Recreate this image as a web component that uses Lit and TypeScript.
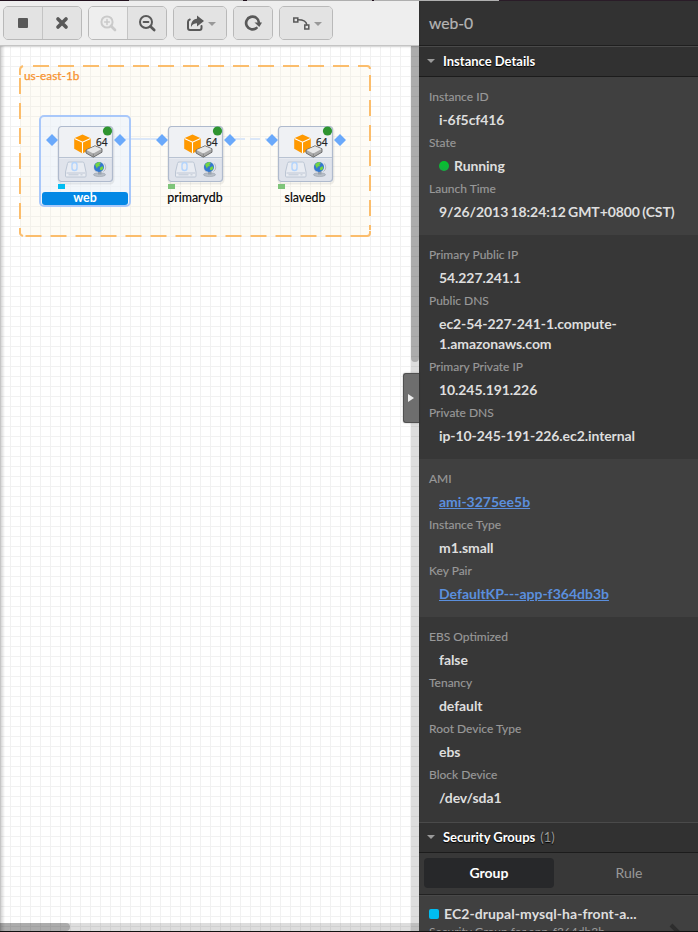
import { LitElement, html, css, svg, nothing } from "lit";
import { customElement, property } from "lit/decorators.js";
import { classMap } from "lit/directives/class-map.js";

const icons = {
  stop: svg`<rect x="5" y="5" width="10" height="10" rx="1"/>`,
  close: svg`<path d="M6 6l8 8M14 6l-8 8" class="line thick"/>`,
  zoomIn: svg`<circle cx="9" cy="9" r="5.6" class="line"/><path d="M13 13l4 4" class="line bold"/><path d="M6.6 9h4.8M9 6.6v4.8" class="line thin"/>`,
  zoomOut: svg`<circle cx="9" cy="9" r="6" class="line"/><path d="M13.500 13.500l3.700 3.500" class="line bold"/><path d="M6.600 9h4.800" class="line"/>`,
  share: svg`<path d="M4.800 6.500C3.200 7 3 7.600 3 9v6q0 2 2 2h9.500q2 0 2-2v-2" class="line"/><path d="M12 2.500l7 5.500L12 13.500v-3.200c-2.500 0-4.200.6-6 3.700-.2-4.700 2-8 6-8.300z"/>`,
  refresh: svg`<path d="M13.500 15A6.400 6.400 0 1 1 15.900 9.500" class="line bold"/><path d="M11.500 9.500h7.500l-2.700 4.500z"/>`,
  curve: svg`<rect x="2.800" y="5" width="4" height="4" class="line thin"/><rect x="13.800" y="12" width="4" height="4" class="line thin"/><path d="M7 6.800c5 0 8.400 1.400 8.800 5" class="line thin"/>`,
};

@customElement("tool-button")
class ToolButton extends LitElement {
  @property() icon: keyof typeof icons = "stop";
  @property({ type: Boolean }) menu = false;
  @property({ type: Boolean, reflect: true }) disabled = false;
  static styles = css`
    :host { display: flex; align-items: center; justify-content: center; height: 32px; background: #e3e3e3; color: #595959; }
    :host([disabled]) { background: #eee; color: #cacaca; }
    svg { display: block; fill: currentColor; }
    .line { fill: none; stroke: currentColor; stroke-width: 2; stroke-linecap: round; }
    .bold { stroke-width: 2.7; }
    .thick { stroke-width: 3.7; }
    .thin { stroke-width: 1.5; }
    .caret { width: 0; margin: 2px 0 0 3px; border: 4px solid transparent; border-top-color: #999; border-bottom: 0; }
  `;
  render() {
    return html`<svg width="20" height="20" viewBox="0 0 20 20">${icons[this.icon]}</svg>
      ${this.menu ? html`<i class="caret"></i>` : nothing}`;
  }
}

@customElement("top-toolbar")
class TopToolbar extends LitElement {
  static styles = css`
    :host { display: flex; gap: 6px; height: 45px; padding: 5px 3px 0; box-sizing: border-box; background: #eee; border-bottom: 1px solid #c4c4c4; box-shadow: 0 1px 2px #0002; position: relative; }
    .group { display: flex; height: 32px; border: 1px solid #b9b9b9; border-radius: 5px; overflow: hidden; }
    .group > * + * { border-left: 1px solid #c4c4c4; }
    .w38 { width: 38px; }
    .w52 { width: 52px; }
  `;
  render() {
    return html`
      <div class="group"><tool-button class="w38" icon="stop"></tool-button><tool-button class="w38" icon="close"></tool-button></div>
      <div class="group"><tool-button class="w38" icon="zoomIn" disabled></tool-button><tool-button class="w38" icon="zoomOut"></tool-button></div>
      <div class="group"><tool-button class="w52" icon="share" menu></tool-button></div>
      <div class="group"><tool-button class="w38" icon="refresh"></tool-button></div>
      <div class="group"><tool-button class="w52" icon="curve" menu></tool-button></div>
    `;
  }
}

interface Instance { name: string; x: number; tag: string; selected?: boolean; }
const instances: Instance[] = [
  { name: "web", x: 57.5, tag: "#00bdf2", selected: true },
  { name: "primarydb", x: 167.5, tag: "#7fc57a" },
  { name: "slavedb", x: 277.5, tag: "#7fc57a" },
];

@customElement("stack-canvas")
class StackCanvas extends LitElement {
  static styles = css`
    :host { display: block; position: relative; overflow: hidden; background: #fff; }
    svg { display: block; }
    text { font-family: Lato, sans-serif; }
    .zone { font-size: 11.8px; fill: #f7922e; stroke: #f7922e; stroke-width: .25px; }
    .name { font-size: 12.4px; fill: #000; stroke: #000; stroke-width: .15px; text-anchor: middle; }
    .name.on { fill: #fff; stroke: none; font-weight: 700; }
    .bits { font: 10px "Open Sans", sans-serif; fill: #222; stroke: #222; stroke-width: .25px; }
    .vbar, .hbar { position: absolute; background: #0002; }
    .vbar { right: 0; top: 0; bottom: 0; width: 8px; }
    .hbar { left: 0; right: 0; bottom: 0; height: 8px; }
    .vthumb, .hthumb { position: absolute; background: #00000038; }
    .vthumb { right: 0; top: 0; width: 8px; height: 316px; border-radius: 0 0 4px 4px; }
    .hthumb { left: 0; bottom: 0; width: 70px; height: 8px; border-radius: 0 4px 4px 0; }
    .shade { position: absolute; left: 0; top: 0; bottom: 0; width: 5px; background: linear-gradient(90deg, #0003, #0000); }
  `;
  instance(n: Instance) {
    return svg`<g transform="translate(${n.x} 125.5)">
      ${n.selected ? svg`<rect x="-17.500" y="-9.500" width="90" height="90" rx="4" fill="#e8f0fd" fill-opacity=".55" stroke="#a9c8fa" stroke-width="2"/>
        <rect x="-15.500" y="66.500" width="86" height="13" rx="3" fill="#0388e5"/>` : nothing}
      <rect x="1" y="2" width="55" height="56" rx="3.500" fill="none" stroke="#0001" stroke-width="2"/>
      <rect x="1" y="1" width="54" height="55" rx="3" fill="#eff1f4"/>
      <path d="M1 33h54v20q0 3-3 3H4q-3 0-3-3z" fill="#dfe3eb"/>
      <path d="M1 32h54" stroke="#b9c3d2"/>
      <rect x="1" y="1" width="54" height="55" rx="3" fill="none" stroke="#afbacd" stroke-width="1.200"/>
      <path d="M25 9l8.300 3.700v10.600L25 28l-8.300-4.700V12.700z" fill="#ff9900"/>
      <path d="M17 13l8 3.700 8-3.700M25 16.700V28" fill="none" stroke="#fff" stroke-width="1.100"/>
      <path d="M28.500 24.500l9-4.200 7 3v3.400l-8.700 5-7.300-4.200z" fill="#aaa" stroke="#666" stroke-width=".9" stroke-linejoin="round"/>
      <path d="M29 24.600l8.500-3.900 6.500 2.700-8.200 4.600z" fill="#e8e8e8"/>
      <path d="M35.800 28v3.300" stroke="#777" stroke-width=".8"/>
      <text class="bits" x="38.500" y="20" textLength="11.500">64</text>
      <circle cx="50" cy="5.500" r="4.600" fill="#2e9430"/>
      <path d="M11.500 36.500h13.500q1.500 0 1.700 1.500l1.800 8.500v4q0 1-1 1h-18.500q-1 0-1-1v-4l2-8.500q.2-1.500 1.500-1.500z" fill="#e9ecf2" stroke="#bcc6d4"/>
      <path d="M9 47.500h18.500M11 49.300h10M23 49.300h2" stroke="#b4bfce" stroke-width=".8"/>
      <rect x="14.500" y="37" width="5" height="8" rx="2.500" fill="none" stroke="#b3d4fc" stroke-width="1.400"/>
      <path d="M38 38q-3 5 1 8.500M47 38q3 5-1 8" fill="none" stroke="#a5acb8" stroke-width=".8"/>
      <ellipse cx="42" cy="49.200" rx="6" ry="1.900" fill="#b8bfc8" stroke="#9098a2" stroke-width=".5"/>
      <path d="M40.500 45.500h3.500v3.500h-3.500z" fill="#98a2ae"/>
      <circle cx="41.500" cy="41.500" r="5" fill="#3478cf"/>
      <path d="M37.500 39q1.500-2.800 5-2.600l.7 1.800-1.700 1 1.200 1.300-2.500.5-.7 2.200zM43 41.500l2.300-.8.600 2.300-2 2-1.700-.9z" fill="#72d544"/>
      <path d="M-11.500 14.500l6-6 6 6-6 6zM56.500 14.500l6-6 6 6-6 6z" fill="#6aa9fb"/>
      <path d="M.5 58.500h7v5h-7z" fill=${n.tag}/>
      <text class="name ${n.selected ? "on" : ""}" x="27.500" y="76.500">${n.name}</text>
    </g>`;
  }
  render() {
    return html`
      <svg width="419" height="885" viewBox="0 46 419 885">
        <defs><pattern id="grid" width="10" height="10" patternUnits="userSpaceOnUse" y="6"><path d="M0 .5h10M.5 0v10" stroke="#f1f1f1"/></pattern></defs>
        <rect x="0" y="45" width="419" height="886" fill="url(#grid)"/>
        <rect x="20" y="67" width="350" height="169" rx="3" fill="#fcf3dc" fill-opacity=".25"/>
        <path d="M27 66H366" stroke="#fbbd6c" stroke-width="2" stroke-dasharray="16 9" stroke-dashoffset="-6"/>
        <path d="M20 78V230M370 75V230" stroke="#fbbd6c" stroke-width="2" stroke-dasharray="16 9"/>
        <path d="M25.500 236H364" stroke="#fbbd6c" stroke-width="2" stroke-dasharray="16 9" />
        <path d="M20 75V70q0-3 3-4M364 66h3q3 0 3 3M370 231v2q0 3-3 3h-3M20 229v4q0 2 3 3" fill="none" stroke="#fbbd6c" stroke-width="2"/>
        <text class="zone" x="24" y="80">us-east-1b</text>
        <path d="M125 139h32" stroke="#dbe7f8" stroke-width="2"/>
        <path d="M235 139h32" stroke="#dbe7f8" stroke-width="2" stroke-dasharray="10 5"/>
        ${instances.map((n) => this.instance(n))}
      </svg>
      <div class="shade"></div>
      <div class="vbar"></div><div class="hbar"></div>
      <div class="vthumb"></div><div class="hthumb"></div>
    `;
  }
}

interface Field { label: string; value: string; link?: boolean; running?: boolean; }
const sections: Field[][] = [
  [
    { label: "Instance ID", value: "i-6f5cf416" },
    { label: "State", value: "Running", running: true },
    { label: "Launch Time", value: "9/26/2013 18:24:12 GMT+0800 (CST)" },
  ],
  [
    { label: "Primary Public IP", value: "54.227.241.1" },
    { label: "Public DNS", value: "ec2-54-227-241-1.compute-1.amazonaws.com" },
    { label: "Primary Private IP", value: "10.245.191.226" },
    { label: "Private DNS", value: "ip-10-245-191-226.ec2.internal" },
  ],
  [
    { label: "AMI", value: "ami-3275ee5b", link: true },
    { label: "Instance Type", value: "m1.small" },
    { label: "Key Pair", value: "DefaultKP---app-f364db3b", link: true },
  ],
  [
    { label: "EBS Optimized", value: "false" },
    { label: "Tenancy", value: "default" },
    { label: "Root Device Type", value: "ebs" },
    { label: "Block Device", value: "/dev/sda1" },
  ],
];

@customElement("property-panel")
class PropertyPanel extends LitElement {
  static styles = css`
    :host { display: flex; flex-direction: column; width: 279px; height: 930px; overflow: hidden; background: #373737; color: #dedede; font: 13px/20px Lato, sans-serif; }
    :host * { box-sizing: border-box; }
    .title { flex: none; height: 45px; padding: 0 10px; font-size: 15.7px; line-height: 45px; color: #b5b5b5; background: #323232; border-bottom: 1px solid #1f1f1f; -webkit-text-stroke: .2px #b5b5b5; }
    .head { flex: none; display: flex; align-items: center; height: 31px; padding: 0 0 1px 8px; background: #313131; border-top: 1px solid #4a4a4a; border-bottom: 1px solid #1c1c1c; font-weight: 700; color: #fff; text-shadow: 0 1px 1px #000; }
    .head i { border: 4px solid transparent; border-top-color: #9a9a9a; border-bottom: 0; margin-right: 8px; }
    .head span { margin-left: 5px; color: #999; font-weight: 400; }
    dl { flex: none; margin: 0; padding: 10px; }
    dl:last-of-type { padding-bottom: 11px; }
    dl.light { background: #404040; }
    dt { font-size: 12px; color: #999; -webkit-text-stroke: .15px #999; }
    dd { display: flex; align-items: center; margin: 3px 0 3px 10px; font-size: 14px; font-weight: 700; letter-spacing: -.08px; width: 240px; }
    dd span { max-width: 197px; }
    dd span.wide { max-width: none; white-space: nowrap; word-spacing: -1px; }
    a { color: #5b8fdd; text-decoration: underline; letter-spacing: 0; }
    .dot { width: 10px; height: 10px; margin-right: 5px; border-radius: 5px; background: linear-gradient(#05c32b, #16ad43); }
    .tabs { flex: none; display: flex; height: 42px; padding: 5px; border-bottom: 1px solid #222; background: #383838; font-size: 14px; line-height: 30px; text-align: center; }
    .tab { width: 130px; height: 30px; border-radius: 4px; color: #999; margin-right: 10px; flex: none; }
    .tab.on { background: #27282a; color: #fff; font-weight: 700; }
    .item { flex: 1; position: relative; padding: 9px 10px; background: #404040; border-top: 1px solid #494949; overflow: hidden; }
    .item b { display: flex; align-items: center; line-height: 18px; font-size: 14px; letter-spacing: .07px; white-space: nowrap; }
    .item b::before { content: ""; width: 10px; height: 10px; margin-right: 5px; border-radius: 2px; background: #00bdf2; }
    .item p { margin: 0; font-size: 12px; line-height: 17px; color: #999; }
    .item svg { position: absolute; right: 9px; top: 27px; }
  `;
  render() {
    return html`
      <div class="title">web-0</div>
      <div class="head"><i></i>Instance Details</div>
      ${sections.map((s, i) => html`<dl class=${classMap({ light: i % 2 === 0 })}>
        ${s.map((f) => html`<dt>${f.label}</dt><dd>${f.running ? html`<i class="dot"></i>` : nothing}${f.link
          ? html`<a>${f.value}</a>`
          : html`<span class=${classMap({ wide: f.label === "Launch Time" || f.label === "Private DNS" })}>${f.value}</span>`}</dd>`)}
      </dl>`)}
      <div class="head"><i></i>Security Groups <span>(1)</span></div>
      <div class="tabs"><div class="tab on">Group</div><div class="tab">Rule</div></div>
      <div class="item"><b>EC2-drupal-mysql-ha-front-a...</b><p>Security Group for app-f364db3b</p>
        <svg width="20" height="20" viewBox="0 0 20 20"><path d="M2 2l8 8-8 8" fill="none" stroke="#2d2d2d" stroke-width="4"/></svg></div>
    `;
  }
}

@customElement("app-root")
class AppRoot extends LitElement {
  static styles = css`
    :host { display: grid; grid-template: 1px 45px 885px 1px / 419px 279px; position: relative; width: 698px; height: 932px; overflow: hidden; background: #111; }
    .strip { grid-column: 1 / 3; background: linear-gradient(90deg, #23121f 129px, #b0b0b0 129px 243px, #23121f 243px 247px, #b0b0b0 247px 372px, #23121f 372px 374px, #b0b0b0 374px 499px, #2a1c28 499px); }
    top-toolbar { grid-area: 2 / 1; z-index: 1; }
    stack-canvas { grid-area: 3 / 1; }
    property-panel { grid-area: 2 / 2 / 4 / 3; }
    .handle { position: absolute; left: 403px; top: 373px; width: 16px; height: 50px; box-sizing: border-box; display: flex; align-items: center; padding-left: 4px; background: #6e6e6e; border: 1px solid #505050; border-right: 0; border-radius: 3px 0 0 3px; box-shadow: 0 0 2px #0005; }
    .handle::before { content: ""; border: 4px solid transparent; border-left: 6px solid #eee; border-right: 0; }
  `;
  render() {
    return html`
      <div class="strip"></div>
      <top-toolbar></top-toolbar>
      <stack-canvas></stack-canvas>
      <property-panel></property-panel>
      <div class="handle"></div>
    `;
  }
}
